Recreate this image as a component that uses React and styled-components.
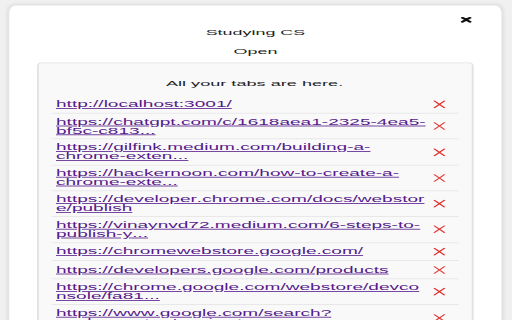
import React from "react";
import styled, { createGlobalStyle } from "styled-components";

// the popup was captured at a different aspect and stretched to 512x320,
// so the page is laid out at its native size and then stretched the same way
const SCALE_X = 1.85;
const SCALE_Y = 0.8;

const tabs = [
  "http://localhost:3001/",
  "https://chatgpt.com/c/1618aea1-2325-4ea5-bf5c-c8134e2a7d90",
  "https://gilfink.medium.com/building-a-chrome-extension-using-react-c5bfe45aaf36",
  "https://hackernoon.com/how-to-create-a-chrome-extension-in-react-js",
  "https://developer.chrome.com/docs/webstore/publish",
  "https://vinaynvd72.medium.com/6-steps-to-publish-your-chrome-extension",
  "https://chromewebstore.google.com/",
  "https://developers.google.com/products",
  "https://chrome.google.com/webstore/devconsole/fa81c2e0-4b1d-4e2a",
  "https://www.google.com/search?q=chrome+extension+publish",
];

const shorten = (url) => (url.length > 50 ? url.slice(0, 50) + "..." : url);

const App = () => {
  return (
    <>
      <GlobalStyle />
      <Stage>
        <Card>
          <CloseRow>
            <CloseButton aria-label="Close">
              <svg width="6" height="7.5" viewBox="0 0 6 7.5">
                <path d="M1 1.2 L5 6.3 M5 1.2 L1 6.3" stroke="#111" strokeWidth="1.9" strokeLinecap="round" />
              </svg>
            </CloseButton>
          </CloseRow>
          <Title>Studying CS</Title>
          <Title>Open</Title>
          <Panel>
            <PanelHeading>All your tabs are here.</PanelHeading>
            <TabList>
              {tabs.map((url) => (
                <TabRow key={url}>
                  <TabLink href={url}>{shorten(url)}</TabLink>
                  <RemoveButton aria-label="Remove tab">
                    <svg width="7" height="11" viewBox="0 0 7 11">
                      <path d="M0.6 1 L6.4 10 M6.4 1 L0.6 10" stroke="#e2312b" strokeWidth="0.95" />
                    </svg>
                  </RemoveButton>
                </TabRow>
              ))}
            </TabList>
          </Panel>
        </Card>
      </Stage>
    </>
  );
};

const GlobalStyle = createGlobalStyle`
  html, body {
    margin: 0;
    height: 320px;
    overflow: hidden;
    background: #f0f0f0;
  }
  body {
    font-family: "Liberation Sans", Arial, sans-serif;
    font-kerning: none;
    color: #222;
  }
`;

const Stage = styled.div`
  width: calc(100vw / ${SCALE_X});
  height: ${320 / SCALE_Y}px;
  overflow: hidden;
  transform: scale(${SCALE_X}, ${SCALE_Y});
  transform-origin: 0 0;
`;

const Card = styled.div`
  margin: 6.25px 0 0 3.8px;
  width: 268.6px;
  min-height: 420px;
  box-sizing: border-box;
  padding: 14px 15.4px 0;
  background: #fff;
  border: 1px solid #e4e4e4;
  border-radius: 4.4px / 10px;
  box-shadow: 0 0 3px rgba(0, 0, 0, 0.08);
`;

const CloseRow = styled.div`
  display: flex;
  justify-content: flex-end;
  height: 7.5px;
  padding-right: 0.6px;
`;

const CloseButton = styled.button`
  display: flex;
  padding: 0;
  border: 0;
  background: none;
  cursor: pointer;
`;

const Title = styled.div`
  text-align: center;
  font-size: 9.7px;
  line-height: 23.75px;

  &:first-of-type {
    margin-top: 5.6px;
  }
`;

const Panel = styled.div`
  margin-top: 1.9px;
  padding: 16.5px 7.4px 0 6.4px;
  background: #f9f9f9;
  border: 1px solid #e2e2e2;
  border-radius: 2.2px / 5px;
`;

const PanelHeading = styled.div`
  text-align: center;
  font-size: 9.8px;
  line-height: 17.5px;
  margin-bottom: 6.25px;
`;

const TabList = styled.ul`
  list-style: none;
  margin: 0;
  padding: 0;
`;

const TabRow = styled.li`
  display: flex;
  align-items: center;
  gap: 2.5px;
  padding: 4.65px 6.8px 4.65px 2.7px;
  border-bottom: 1px solid #e4e4e4;
`;

const TabLink = styled.a`
  flex: 1;
  min-width: 0;
  font-size: 10.3px;
  line-height: 11px;
  color: #551a8b;
  text-decoration: underline;
  overflow-wrap: anywhere;
`;

const RemoveButton = styled.button`
  display: flex;
  align-items: center;
  justify-content: center;
  width: 7px;
  height: 12.5px;
  padding: 0;
  border: 0;
  background: none;
  cursor: pointer;
`;

export default App;
